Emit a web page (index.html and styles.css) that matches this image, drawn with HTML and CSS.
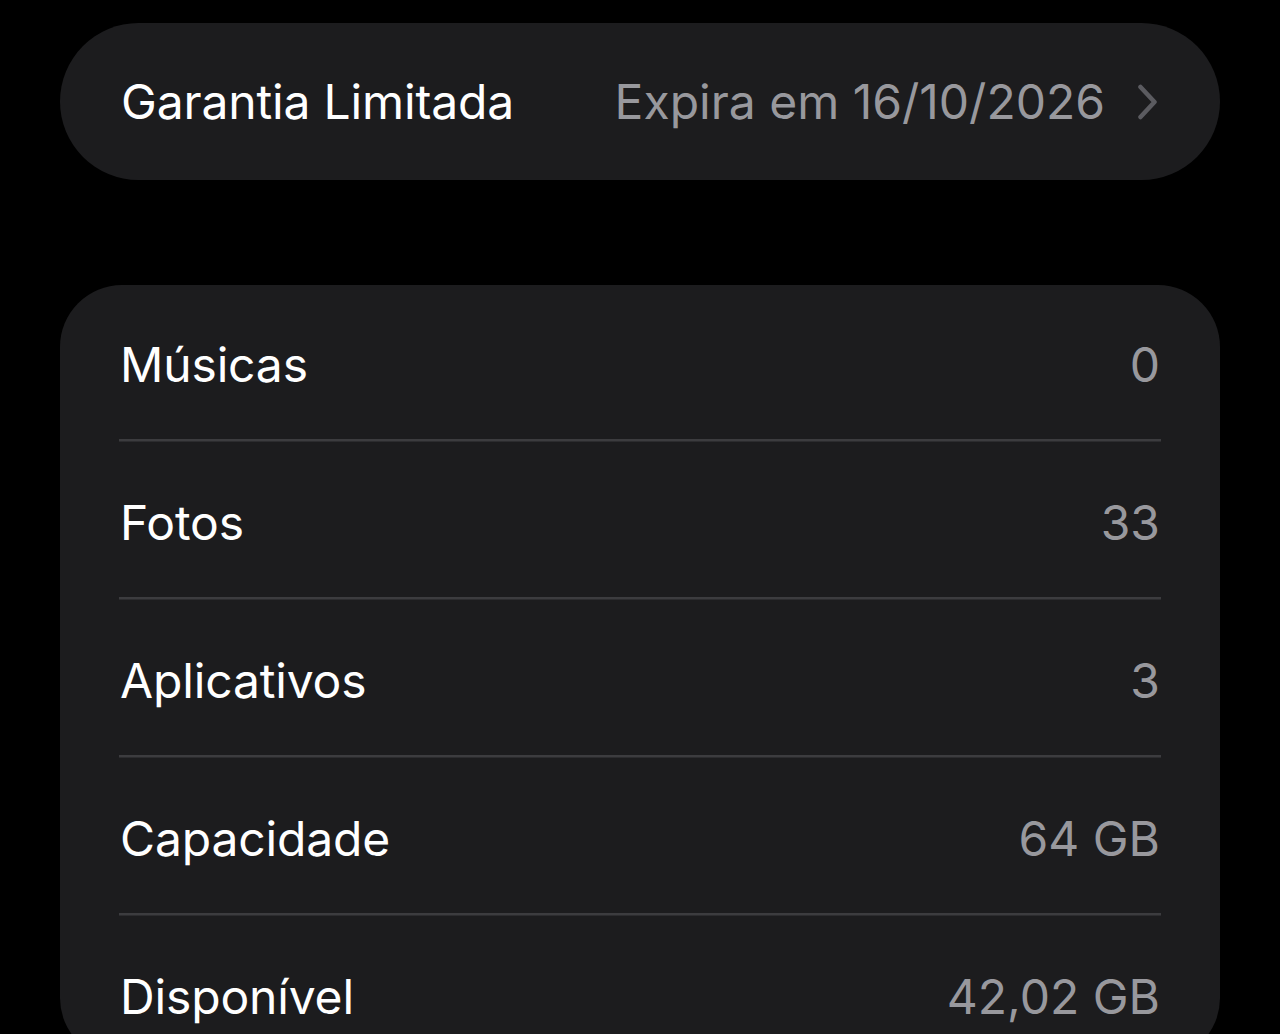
FILE: index.html
```html
<!DOCTYPE html>
<html lang="pt">
<head>
<meta charset="utf-8">
<link rel="stylesheet" href="styles.css">
</head>
<body>
<main class="page">
  <section class="card card-pill">
    <div class="row">
      <span class="label">Garantia Limitada</span>
      <span class="value">Expira em 16/10/2026
        <svg class="chev" width="22" height="36" viewBox="0 0 22 36"><path d="M3.5 3 L17.5 18 L3.5 33" fill="none" stroke="#5b5b60" stroke-width="4.5" stroke-linecap="round" stroke-linejoin="round"/></svg>
      </span>
    </div>
  </section>
  <section class="card card-list">
    <div class="row"><span class="label">Músicas</span><span class="value">0</span></div>
    <div class="row"><span class="label">Fotos</span><span class="value">33</span></div>
    <div class="row"><span class="label">Aplicativos</span><span class="value">3</span></div>
    <div class="row"><span class="label">Capacidade</span><span class="value">64 GB</span></div>
    <div class="row"><span class="label">Disponível</span><span class="value">42,02 GB</span></div>
  </section>
</main>
</body>
</html>
```
FILE: styles.css
```css
html, body {
  margin: 0;
  padding: 0;
  background: #000;
  height: 1034px;
  overflow: hidden;
}
.page {
  padding: 23px 60px 0;
  display: flex;
  flex-direction: column;
  gap: 105px;
  font-family: Inter, "Noto Sans", sans-serif;
}
.card {
  background: #1c1c1e;
  padding: 0 60px;
}
.card-pill {
  height: 157px;
  border-radius: 79px;
  display: flex;
  align-items: center;
  padding-right: 60px;
}
.card-pill .row {
  flex: 1;
  height: auto;
  background: none;
}
.card-list {
  border-radius: 62px;
  height: 775px;
  padding: 0 59px;
}
.row {
  display: flex;
  justify-content: space-between;
  align-items: center;
  height: 158px;
  padding: 0 1px;
  background: linear-gradient(#3c3c3f, #3c3c3f) no-repeat 0 154px / 100% 2.5px;
}
.card-list .row:last-child {
  background: none;
}
.label {
  color: #fff;
  font-size: 48px;
  letter-spacing: -0.15px;
}
.value {
  color: #98989d;
  font-size: 48px;
  display: flex;
  align-items: center;
  gap: 32px;
}
.chev {
  display: block;
}
```
